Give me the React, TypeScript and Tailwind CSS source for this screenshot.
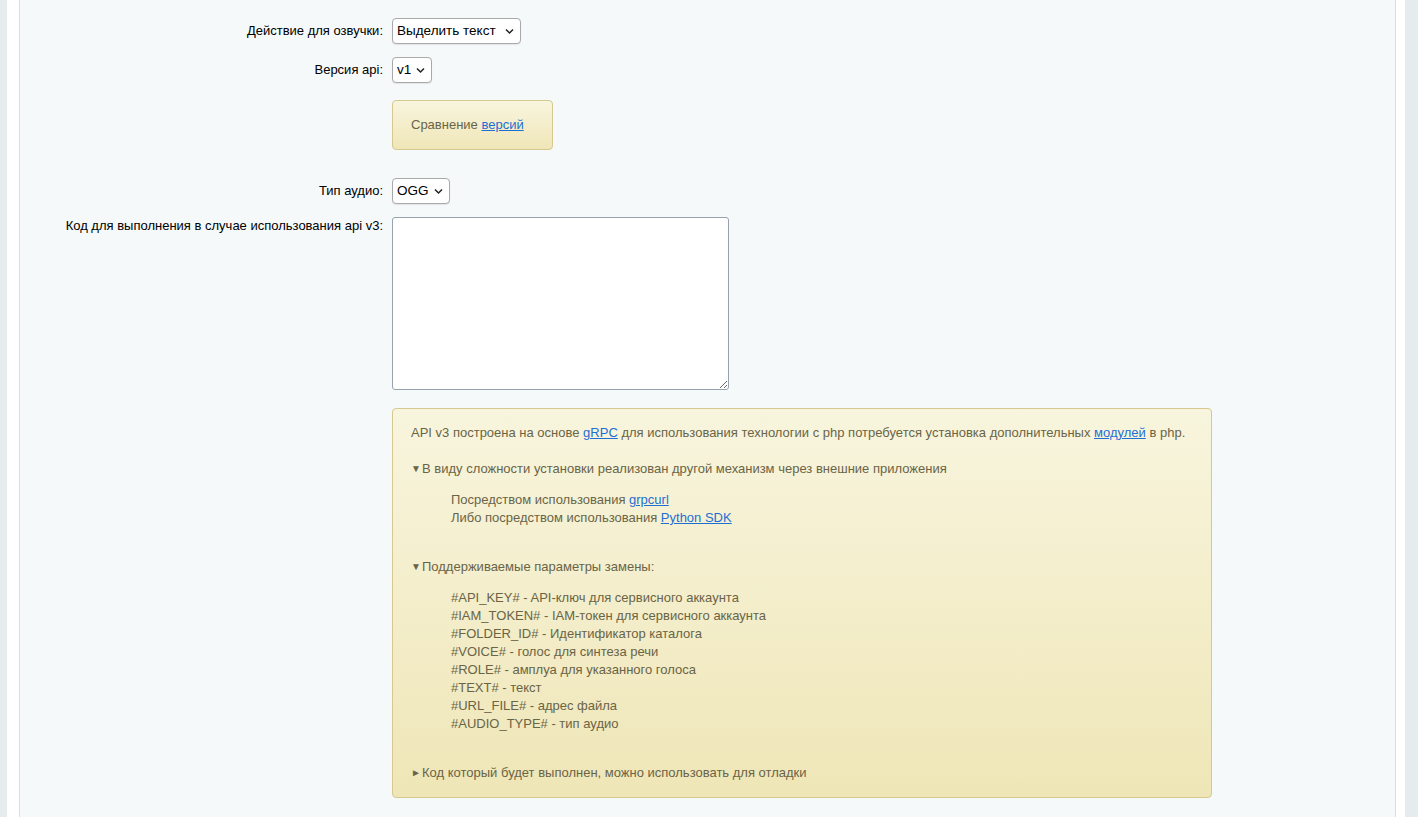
import React from "react";

const Chevron = () => (
    <svg
        width="11"
        height="11"
        viewBox="0 0 11 11"
        className="pointer-events-none absolute right-[6px] top-1/2 -translate-y-1/2"
    >
        <path d="M2 4 L5.5 7.5 L9 4" fill="none" stroke="#222" strokeWidth="1.5" />
    </svg>
);

interface SelectProps {
    value: string;
    options: string[];
    width: string;
}

const Select = (props: SelectProps) => {
    return (
        <div className={`relative h-[26px] ${props.width}`}>
            <select
                defaultValue={props.value}
                className="h-full w-full appearance-none rounded-[4px] border border-[#a9a9a9] bg-white pl-[4px] pr-5 text-[13.5px] text-black shadow-[0_1px_1px_rgba(0,0,0,0.08)] outline-none"
            >
                {props.options.map((o) => (
                    <option key={o}>{o}</option>
                ))}
            </select>
            <Chevron />
        </div>
    );
};

const Label = ({ text, top = "pt-[5px]" }: { text: string; top?: string }) => (
    <div className={`text-right text-[13px] leading-4 text-black ${top}`}>{text}</div>
);

const A = ({ children }: { children: React.ReactNode }) => (
    <a href="#" className="text-[#1e6fd4] underline">
        {children}
    </a>
);

const Marker = ({ open }: { open: boolean }) => (
    <span className="mr-[4px] inline-block w-[7px] align-[1px] text-[10px] leading-none">
        {open ? "▼" : "►"}
    </span>
);

const params = [
    "#API_KEY# - API-ключ для сервисного аккаунта",
    "#IAM_TOKEN# - IAM-токен для сервисного аккаунта",
    "#FOLDER_ID# - Идентификатор каталога",
    "#VOICE# - голос для синтеза речи",
    "#ROLE# - амплуа для указанного голоса",
    "#TEXT# - текст",
    "#URL_FILE# - адрес файла",
    "#AUDIO_TYPE# - тип аудио",
];

export default function App() {
    return (
        <div
            className="flex h-[817px] overflow-hidden bg-[#e6ecee]"
            style={{ fontFamily: '"Liberation Sans", Arial, sans-serif' }}
        >
            <div className="w-[7px] shrink-0" />
            <div className="flex flex-1 bg-white pl-[12px] pr-[9px]">
                <div className="flex-1 border-x border-[#d6dfe2] bg-[#f5f9fa]">
                    <div className="grid grid-cols-[363px_1fr] gap-x-[9px] pt-[18px]">
                        <Label text="Действие для озвучки:" />
                        <Select value="Выделить текст" options={["Выделить текст"]} width="w-[129px]" />

                        <div className="col-span-2 h-[13px]" />
                        <Label text="Версия api:" />
                        <Select value="v1" options={["v1", "v3"]} width="w-[40px]" />

                        <div className="col-span-2 h-[17px]" />
                        <div />
                        <div>
                            <div className="inline-flex h-[50px] w-[161px] items-center rounded-[4px] border border-[#d6c88f] bg-gradient-to-b from-[#f8f5de] to-[#efe6b7] pl-[18px] text-[13px] text-[#6a6446]">
                                Сравнение&nbsp;<A>версий</A>
                            </div>
                        </div>

                        <div className="col-span-2 h-[28px]" />
                        <Label text="Тип аудио:" />
                        <Select value="OGG" options={["OGG", "MP3", "WAV"]} width="w-[58px]" />

                        <div className="col-span-2 h-[13px]" />
                        <Label text="Код для выполнения в случае использования api v3:" top="pt-[1px]" />
                        <div>
                            <textarea className="block h-[173px] w-[337px] rounded-[3px] border border-[#98a2ad] bg-white" />
                        </div>

                        <div className="col-span-2 h-[18px]" />
                        <div />
                        <div>
                            <div className="h-[390px] w-[820px] rounded-[4px] border border-[#d6c88f] bg-gradient-to-b from-[#f8f5de] to-[#efe6b7] px-[18px] pt-[15px] text-[13px] leading-[18px] text-[#6a6446]">
                                <div>
                                    API v3 построена на основе <A>gRPC</A> для использования технологии с php потребуется установка дополнительных <A>модулей</A> в php.
                                </div>

                                <div className="mt-[18px]">
                                    <Marker open />
                                    В виду сложности установки реализован другой механизм через внешние приложения
                                </div>
                                <div className="mt-[13px] pl-[40px]">
                                    <div>
                                        Посредством использования <A>grpcurl</A>
                                    </div>
                                    <div>
                                        Либо посредством использования <A>Python SDK</A>
                                    </div>
                                </div>

                                <div className="mt-[31px]">
                                    <Marker open />
                                    Поддерживаемые параметры замены:
                                </div>
                                <div className="mt-[13px] pl-[40px]">
                                    {params.map((p) => (
                                        <div key={p}>{p}</div>
                                    ))}
                                </div>

                                <div className="mt-[31px]">
                                    <Marker open={false} />
                                    Код который будет выполнен, можно использовать для отладки
                                </div>
                            </div>
                        </div>
                    </div>
                </div>
            </div>
            <div className="w-[13px] shrink-0" />
        </div>
    );
}
